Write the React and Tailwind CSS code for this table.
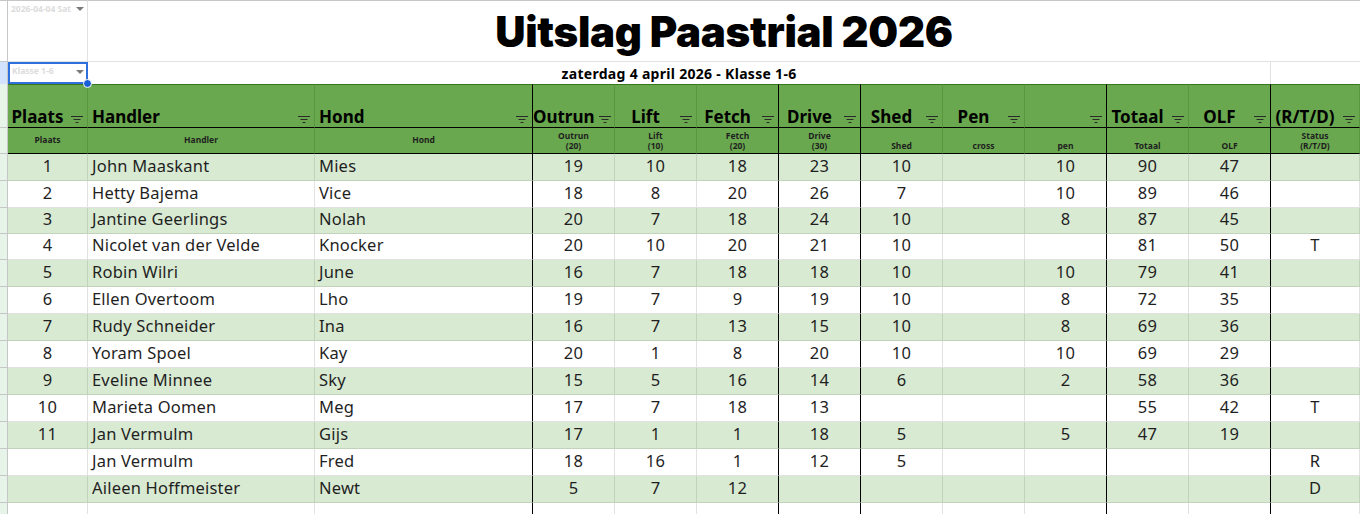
import React from 'react';

const GRID = 'grid grid-cols-[8px_80px_227px_218px_82px_82px_82px_82px_82px_82px_82px_82px_82px_89px]';

// kolommen: label, subkop, uitlijning, rechterrand zwart?
const COLS = [
  { head: 'Plaats', sub: ['Plaats'], mid: true, align: 'center' },
  { head: 'Handler', sub: ['Handler'], mid: true, align: 'left' },
  { head: 'Hond', sub: ['Hond'], mid: true, align: 'left', dark: true },
  { head: 'Outrun', sub: ['Outrun', '(20)'], align: 'center' },
  { head: 'Lift', sub: ['Lift', '(10)'], align: 'center' },
  { head: 'Fetch', sub: ['Fetch', '(20)'], align: 'center', dark: true },
  { head: 'Drive', sub: ['Drive', '(30)'], align: 'center', dark: true },
  { head: 'Shed', sub: ['Shed'], align: 'center' },
  { head: 'Pen', sub: ['cross'], align: 'center' },
  { head: '', sub: ['pen'], align: 'center', dark: true },
  { head: 'Totaal', sub: ['Totaal'], align: 'center' },
  { head: 'OLF', sub: ['OLF'], align: 'center', dark: true },
  { head: '(R/T/D)', sub: ['Status', '(R/T/D)'], align: 'center' },
];

const ROWS = [
  ['1', 'John Maaskant', 'Mies', '19', '10', '18', '23', '10', '', '10', '90', '47', ''],
  ['2', 'Hetty Bajema', 'Vice', '18', '8', '20', '26', '7', '', '10', '89', '46', ''],
  ['3', 'Jantine Geerlings', 'Nolah', '20', '7', '18', '24', '10', '', '8', '87', '45', ''],
  ['4', 'Nicolet van der Velde', 'Knocker', '20', '10', '20', '21', '10', '', '', '81', '50', 'T'],
  ['5', 'Robin Wilri', 'June', '16', '7', '18', '18', '10', '', '10', '79', '41', ''],
  ['6', 'Ellen Overtoom', 'Lho', '19', '7', '9', '19', '10', '', '8', '72', '35', ''],
  ['7', 'Rudy Schneider', 'Ina', '16', '7', '13', '15', '10', '', '8', '69', '36', ''],
  ['8', 'Yoram Spoel', 'Kay', '20', '1', '8', '20', '10', '', '10', '69', '29', ''],
  ['9', 'Eveline Minnee', 'Sky', '15', '5', '16', '14', '6', '', '2', '58', '36', ''],
  ['10', 'Marieta Oomen', 'Meg', '17', '7', '18', '13', '', '', '', '55', '42', 'T'],
  ['11', 'Jan Vermulm', 'Gijs', '17', '1', '1', '18', '5', '', '5', '47', '19', ''],
  ['', 'Jan Vermulm', 'Fred', '18', '16', '1', '12', '5', '', '', '', '', 'R'],
  ['', 'Aileen Hoffmeister', 'Newt', '5', '7', '12', '', '', '', '', '', '', 'D'],
  ['', '', '', '', '', '', '', '', '', '', '', '', ''],
];

const FilterIcon = () => (
  <svg width="12" height="7" viewBox="0 0 12 7" className="shrink-0 ml-1 mr-1 mb-[4px]">
    <path d="M0 0.5h12M2.5 3.5h7M4.5 6.5h3" stroke="#2a2a2a" strokeWidth="1" />
  </svg>
);

const Caret = () => (
  <svg width="8" height="4" viewBox="0 0 8 4" className="shrink-0">
    <path d="M0 0h8L4 4z" fill="#7a7a7a" />
  </svg>
);

export default function App() {
  return (
    <div className="w-[1360px] h-[514px] overflow-hidden bg-white text-[#1f1f1f] font-['Noto_Sans',sans-serif]">
      {/* titel */}
      <div className={GRID}>
        <div className="h-[62px] border-t border-r border-b border-[#c7c7c7] bg-white" />
        <div className="h-[62px] border-t border-t-[#c7c7c7] border-r border-b border-[#e1e1e1] px-[3px] pt-[2px]">
          <div className="flex items-center justify-between">
            <span className="text-[8.5px] font-bold text-[#dcdcdc] whitespace-nowrap">2026-04-04 Sat</span>
            <Caret />
          </div>
        </div>
        <div className="col-span-12 h-[62px] border-t border-t-[#c7c7c7] border-b border-[#e1e1e1] flex items-center justify-center">
          <span className="text-[42px] leading-none font-black tracking-[-0.3px] text-black font-['Inter',sans-serif] pt-[2px]">
            Uitslag Paastrial 2026
          </span>
        </div>
      </div>

      {/* subtitel */}
      <div className={GRID}>
        <div className="h-[22px] border-r border-[#c7c7c7] bg-[#d3e3fd]" />
        <div className="relative h-[22px] border-2 border-[#2f6fde] px-[2px] flex items-start pt-[1px] justify-between">
          <span className="text-[8.5px] font-bold text-[#dcdcdc] whitespace-nowrap">Klasse 1-6</span>
          <span className="mt-[5px]"><Caret /></span>
          <span className="absolute -right-[6px] -bottom-[6px] w-[9px] h-[9px] rounded-full bg-[#1a5fd6] border border-white z-10" />
        </div>
        <div className="col-span-11 h-[22px] border-r border-[#e1e1e1] flex items-center justify-center">
          <span className="text-[14px] tracking-[0.3px] font-bold text-black">zaterdag 4 april 2026 - Klasse 1-6</span>
        </div>
        <div className="h-[22px]" />
      </div>

      {/* kopregel */}
      <div className={GRID}>
        <div className="h-[44px] border-r border-b border-[#c7c7c7] bg-[#e6f4ea]" />
        {COLS.map((c, i) => (
          <div
            key={i}
            className={`h-[44px] bg-[#6aa84f] border-t border-t-[#38761d] border-b border-b-black border-r flex items-end ${c.dark ? 'border-r-black' : 'border-r-[#5a9640]'}`}
          >
            <span
              className={`flex-1 text-[17px] leading-[20px] font-bold text-black whitespace-nowrap overflow-visible ${c.align === 'left' ? 'text-left pl-[4px]' : 'text-center'}`}
            >
              {c.head}
            </span>
            <FilterIcon />
          </div>
        ))}
      </div>

      {/* subkop */}
      <div className={GRID}>
        <div className="h-[26px] border-r border-b border-[#c7c7c7] bg-[#e6f4ea]" />
        {COLS.map((c, i) => (
          <div
            key={i}
            className={`h-[26px] bg-[#6aa84f] border-b border-b-black border-r flex flex-col pb-[2px] ${c.mid ? 'justify-center' : 'justify-end'} ${c.dark ? 'border-r-black' : 'border-r-[#5a9640]'}`}
          >
            {c.sub.map((s, j) => (
              <span key={j} className="text-[8.5px] leading-[10px] font-bold text-[#1f1f1f] text-center">
                {s}
              </span>
            ))}
          </div>
        ))}
      </div>

      {/* data */}
      {ROWS.map((r, ri) => {
        const green = ri % 2 === 0 && ri < 13;
        const h = ri === 2 || ri === 3 ? 'h-[26px]' : 'h-[27px]';
        return (
          <div key={ri} className={GRID}>
            <div className={`${h} border-r border-b border-[#c4c7c5] bg-[#e6f4ea]`} />
            {r.map((v, ci) => {
              const c = COLS[ci];
              return (
                <div
                  key={ci}
                  className={`${h} border-r border-b flex items-center pb-[2px] text-[16.5px] tracking-[0.2px] whitespace-nowrap overflow-hidden ${green ? 'bg-[#d9ead3] border-b-[#c1d3bb]' : 'bg-white border-b-[#e1e1e1]'} ${c.dark ? 'border-r-black' : green ? 'border-r-[#c1d3bb]' : 'border-r-[#e1e1e1]'} ${c.align === 'left' ? 'justify-start pl-[4px]' : 'justify-center'}`}
                >
                  {v}
                </div>
              );
            })}
          </div>
        );
      })}
    </div>
  );
}
